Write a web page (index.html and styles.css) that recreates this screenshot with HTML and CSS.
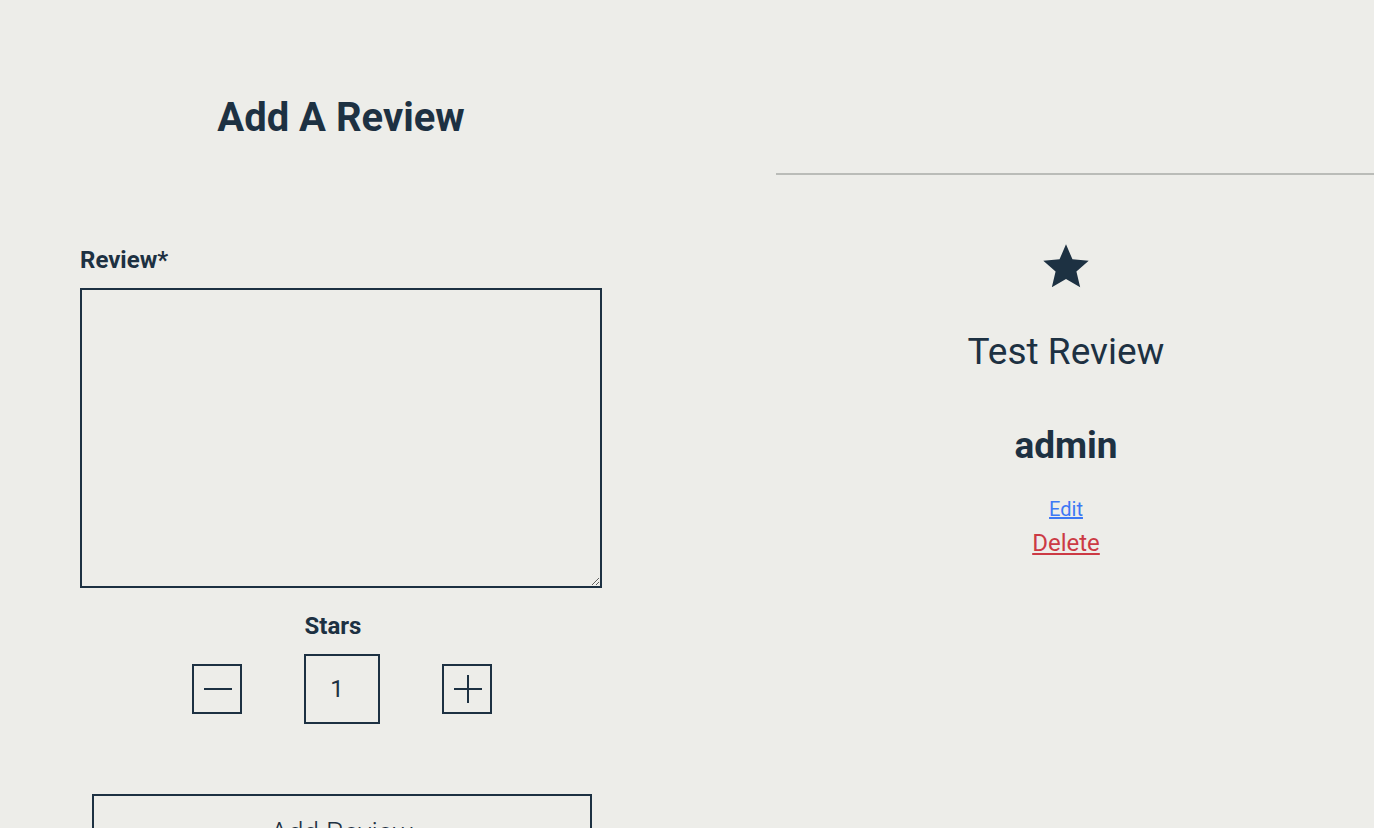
FILE: index.html
```html
<!DOCTYPE html>
<html>
<head>
<meta charset="utf-8">
<link rel="stylesheet" href="styles.css">
</head>
<body>
<div class="page">
  <section class="form-col">
    <h1 class="title">Add A Review</h1>
    <form class="form">
      <label class="label" for="review">Review*</label>
      <textarea id="review" class="textarea"></textarea>
      <div class="stars-label">Stars</div>
      <div class="stepper">
        <button type="button" class="step-btn" aria-label="decrease">
          <svg width="30" height="30" viewBox="0 0 30 30"><path d="M2 15H30" stroke="#1d3142" stroke-width="2"/></svg>
        </button>
        <div class="count">1</div>
        <button type="button" class="step-btn" aria-label="increase">
          <svg width="30" height="30" viewBox="0 0 30 30"><path d="M2 15H30M16 1V29" stroke="#1d3142" stroke-width="2"/></svg>
        </button>
      </div>
      <button type="button" class="submit">Add Review</button>
    </form>
  </section>
  <section class="reviews-col">
    <hr class="rule">
    <div class="review">
      <svg class="star" width="50" height="50" viewBox="0 0 24 24"><path d="M12 1.6l3.1 7.2 7.8.7-5.9 5.1 1.8 7.6L12 18.2l-6.8 4 1.8-7.6-5.9-5.1 7.8-.7z" fill="#1d3142"/></svg>
      <p class="review-text">Test Review</p>
      <p class="review-user">admin</p>
      <a class="edit" href="#">Edit</a>
      <a class="delete" href="#">Delete</a>
    </div>
  </section>
</div>
</body>
</html>
```
FILE: styles.css
```css
html, body {
  margin: 0;
  padding: 0;
  background: #edede9;
  color: #1d3142;
  font-family: Roboto, "Noto Sans", sans-serif;
  overflow: hidden;
}
.page {
  display: flex;
  height: 828px;
}
.form-col {
  width: 682px;
  display: flex;
  flex-direction: column;
  align-items: center;
}
.title {
  margin: 94px 0 0;
  font-size: 40px;
  font-weight: 700;
  line-height: 47px;
}
.form {
  margin-top: 105px;
  width: 522px;
  display: flex;
  flex-direction: column;
  align-items: center;
}
.label {
  align-self: flex-start;
  font-size: 24px;
  font-weight: 700;
  line-height: 28px;
  margin-bottom: 14px;
}
.textarea {
  box-sizing: border-box;
  width: 522px;
  height: 300px;
  border: 2px solid #1d3142;
  background: transparent;
  resize: both;
  margin: 0;
}
.stars-label {
  margin-top: 24px;
  font-size: 24px;
  font-weight: 700;
  line-height: 28px;
  margin-left: -16px;
}
.stepper {
  margin-top: 14px;
  display: flex;
  align-items: center;
  gap: 62px;
  margin-left: 2px;
}
.step-btn {
  box-sizing: border-box;
  width: 50px;
  height: 50px;
  border: 2px solid #1d3142;
  background: transparent;
  padding: 0;
  display: flex;
  align-items: center;
  justify-content: center;
}
.count {
  box-sizing: border-box;
  width: 76px;
  height: 70px;
  border: 2px solid #1d3142;
  display: flex;
  align-items: center;
  justify-content: center;
  font-size: 24px;
  padding-right: 10px;
}
.submit {
  margin-top: 70px;
  box-sizing: border-box;
  width: 500px;
  height: 70px;
  border: 2px solid #1d3142;
  background: transparent;
  color: #1d3142;
  font-family: Roboto, sans-serif;
  font-weight: 300;
  font-size: 28px;
  padding-top: 8px;
  align-self: flex-start;
  margin-left: 12px;
}
.reviews-col {
  flex: 1;
  margin-left: 76px;
}
.rule {
  margin: 173px 0 0 18px;
  border: 0;
  height: 2px;
  background: #babcb8;
}
.review {
  display: flex;
  flex-direction: column;
  align-items: center;
}
.star {
  margin-top: 66px;
}
.review-text {
  margin: 39px 0 0;
  font-size: 37px;
  line-height: 43px;
}
.review-user {
  margin: 51px 0 0;
  font-size: 37px;
  font-weight: 700;
  line-height: 43px;
}
.edit {
  margin-top: 30px;
  font-size: 20px;
  line-height: 24px;
  color: #3d78f5;
}
.delete {
  margin-top: 8px;
  font-size: 24px;
  line-height: 28px;
  color: #cc3a44;
}
```
